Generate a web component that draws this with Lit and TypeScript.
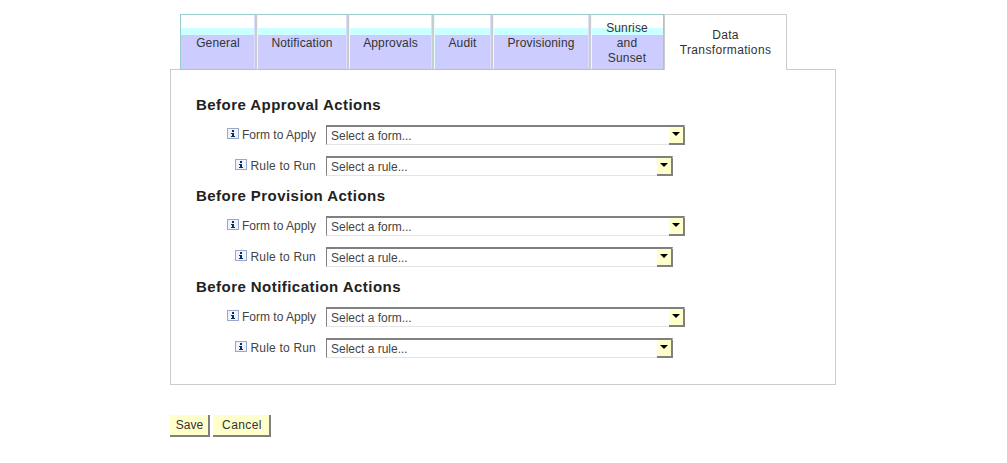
import { LitElement, html, css } from "lit";
import { customElement } from "lit/decorators.js";

const tabs = [
  { label: ["General"], w: 77 },
  { label: ["Notification"], w: 92 },
  { label: ["Approvals"], w: 85 },
  { label: ["Audit"], w: 59 },
  { label: ["Provisioning"], w: 98 },
  { label: ["Sunrise", "and", "Sunset"], w: 73 },
];
const sections = ["Before Approval Actions", "Before Provision Actions", "Before Notification Actions"];

@customElement("app-root")
export class AppRoot extends LitElement {
  static styles = css`
    :host { display: block; font-family: "Liberation Sans", Arial, sans-serif; font-size: 12px; color: #333; }
    .page { width: 666px; margin-left: 170px; padding-top: 14px; }
    .tabs { display: flex; margin-left: 10px; height: 55px; }
    .tab { box-sizing: border-box; border-top: 1px solid #99cccc; border-bottom: 1px solid #99cccc; border-right: 2px solid #cccccc;
      height: 56px; padding-top: 2px; text-align: center; display: flex; flex-direction: column; justify-content: center; line-height: 15px; letter-spacing: .15px; position: relative;
      background: linear-gradient(#fff 0 13px, #ccffff 13px 20px, #ccccff 20px); box-shadow: inset 1px 0 0 #dcffff, inset -1px 0 0 #dcdcff; }
    .tab:first-child { border-left: 1px solid #99cccc; box-shadow: inset -1px 0 0 #dcdcff; }
    .tab:nth-child(6) { border-right: 1px solid #99cccc; box-shadow: inset 1px 0 0 #dcffff; }
    .tab.active { background: #fff; border: 1px solid #cccccc; border-bottom: none; box-shadow: none; padding-top: 0; width: 123px; z-index: 1; letter-spacing: .35px; }
    .panel { box-sizing: border-box; height: 316px; border: 1px solid #cccccc; padding: 25px 25px 0; }
    h2 { margin: 0; font-size: 15px; line-height: 20px; font-weight: bold; color: #222; letter-spacing: 0.45px; }
    .row { display: flex; align-items: flex-start; height: 21px; margin-top: 10px; }
    .row + h2 { margin-top: 9px; }
    .label { width: 120px; height: 20px; display: flex; justify-content: flex-end; align-items: center; gap: 3px; margin-right: 10px; color: #444; }
    .label.rule-l { letter-spacing: .2px; }
    .info { width: 12px; height: 11px; margin-bottom: 3px; }
    .sel { position: relative; box-sizing: border-box; height: 20px; display: block; }
    .sel select { appearance: none; width: 100%; height: 20px; box-sizing: border-box; margin: 0; padding: 1px 0 0 4px; font: inherit; color: #444; background: #fff;
      border: 1px solid #e4e4e4; border-top: 2px solid #808080; border-left: 1px solid #808080; border-radius: 0; }
    .arrow { position: absolute; right: 0; top: 2px; width: 16px; height: 18px; box-sizing: border-box; padding-bottom: 3px; background: #ffffcc; border-right: 2px solid #808080; border-bottom: 2px solid #808080; display: flex; align-items: center; justify-content: center; pointer-events: none; }
    .arrow svg { width: 8px; height: 4px; }
    .form { width: 359px; } .rule { width: 347px; }
    .btns { display: flex; gap: 3px; margin-top: 30px; }
    button { box-sizing: border-box; height: 22px; margin: 0; padding: 0; font: inherit; color: #333; letter-spacing: .4px; background: #ffffcc; border: none;
      border-right: 2px solid #808080; border-bottom: 2px solid #808080; }
    .save { width: 40px; padding-left: 1px; letter-spacing: 0; } .cancel { width: 58px; padding-left: 2px; }
  `;

  icon() {
    return html`<svg class="info" viewBox="0 0 12 11"><rect x=".5" y=".5" width="11" height="10" fill="#f2f2fa" stroke="#9aa8cc"/><rect x="5" y="2" width="2" height="2" fill="#036"/><path d="M4 5h3v3h1v1H4V8h1V6H4z" fill="#036"/></svg>`;
  }
  field(label: string, placeholder: string, cls: string) {
    return html`<div class="row">
      <div class="label ${cls}-l">${this.icon()}<span>${label}</span></div>
      <div class="sel ${cls}"><select><option>${placeholder}</option></select>
        <span class="arrow"><svg viewBox="0 0 8 4"><path d="M0 0h8L4 4z" fill="#000"/></svg></span></div>
    </div>`;
  }
  render() {
    return html`<div class="page">
      <div class="tabs">
        ${tabs.map((t) => html`<div class="tab" style="width:${t.w}px">${t.label.map((l) => html`<div>${l}</div>`)}</div>`)}
        <div class="tab active"><div>Data</div><div>Transformations</div></div>
      </div>
      <div class="panel">
        ${sections.map((s) => html`<h2>${s}</h2>
          ${this.field("Form to Apply", "Select a form...", "form")}
          ${this.field("Rule to Run", "Select a rule...", "rule")}`)}
      </div>
      <div class="btns"><button class="save">Save</button><button class="cancel">Cancel</button></div>
    </div>`;
  }
}
